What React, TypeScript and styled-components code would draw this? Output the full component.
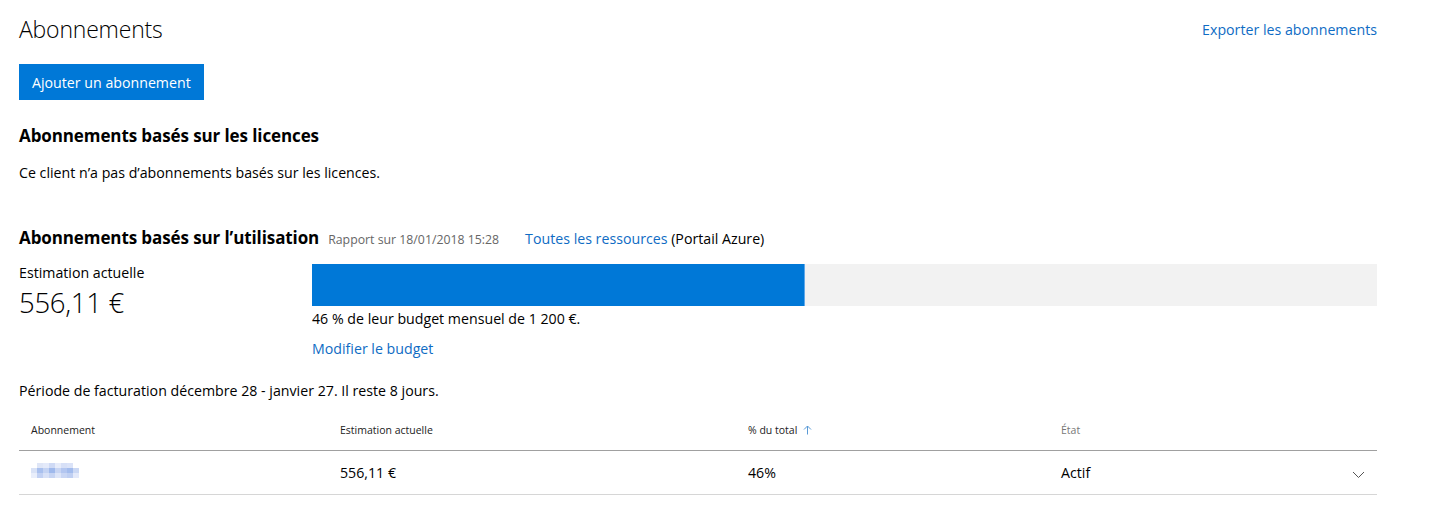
import React from "react";
import styled, { createGlobalStyle } from "styled-components";

const GlobalStyle = createGlobalStyle`
  html, body {
    margin: 0;
    padding: 0;
    background: #ffffff;
  }
  body {
    font-family: "Open Sans", "Noto Sans", Arial, sans-serif;
    color: #000000;
  }
`;

const Page = styled.div`
  width: 1358px;
  padding: 12px 0 0 19px;
`;

const TopRow = styled.div`
  display: flex;
  justify-content: space-between;
  align-items: center;
  height: 34px;
`;

const PageTitle = styled.h1`
  margin: 0;
  font-size: 23px;
  font-weight: 300;
  letter-spacing: -0.2px;
`;

const Link = styled.a<{ size?: number }>`
  color: #0f6cc4;
  font-size: ${(p) => p.size ?? 14.2}px;
  text-decoration: none;
  cursor: pointer;
`;

const PrimaryButton = styled.button`
  margin-top: 18px;
  height: 36px;
  padding: 0 13px;
  background: #0078d7;
  color: #ffffff;
  border: none;
  font-family: inherit;
  font-size: 14.2px;
`;

const SectionTitle = styled.h2`
  margin: 0;
  font-size: 17px;
  font-weight: 700;
  letter-spacing: -0.1px;
`;

const LicenceBlock = styled.div`
  margin-top: 24px;
`;

const Body = styled.p<{ top?: number }>`
  margin: ${(p) => p.top ?? 0}px 0 0 0;
  font-size: 14.2px;
  line-height: 20px;
`;

const UsageHeader = styled.div`
  margin-top: 43px;
  display: flex;
  align-items: baseline;
`;

const Meta = styled.span`
  margin-left: 9px;
  font-size: 12.3px;
  color: #666666;
`;

const Source = styled.span`
  margin-left: 26px;
  font-size: 14.2px;
`;

const EstimateRow = styled.div`
  margin-top: 14px;
  display: flex;
`;

const EstimateCol = styled.div`
  width: 293px;
`;

const Label = styled.div`
  font-size: 14.2px;
  line-height: 20px;
`;

const Amount = styled.div`
  font-size: 27.5px;
  font-weight: 300;
  line-height: 40px;
  letter-spacing: -0.3px;
`;

const BudgetCol = styled.div`
  flex: 1;
  padding-top: 1px;
`;

const BarTrack = styled.div`
  height: 42px;
  background: #f2f2f2;
`;

const BarFill = styled.div`
  height: 100%;
  background: #0078d7;
  border-right: 1px solid #5ea8ea;
  box-sizing: border-box;
`;

const BudgetText = styled.div`
  margin-top: 3px;
  font-size: 14.2px;
  line-height: 20px;
`;

const BudgetLink = styled.div`
  margin-top: 9px;
  line-height: 20px;
`;

const Table = styled.div`
  margin-top: 9px;
`;

const Row = styled.div<{ head?: boolean }>`
  display: grid;
  grid-template-columns: 309px 408px 313px 1fr 25px;
  align-items: center;
  padding-left: 12px;
  height: ${(p) => (p.head ? 40 : 43)}px;
  border-bottom: 1px solid ${(p) => (p.head ? "#a0a0a0" : "#d6d6d6")};
`;

const HeadCell = styled.div<{ muted?: boolean }>`
  font-size: 10.5px;
  color: ${(p) => (p.muted ? "#777777" : "#222222")};
  display: flex;
  align-items: center;
  gap: 6px;
`;

const Cell = styled.div`
  font-size: 14.2px;
`;

const ChevronCell = styled.div`
  display: flex;
  justify-content: flex-start;
  padding-top: 4px;
`;

const blurColors = [
  ["#fff", "#dfe6f7", "#e4eafa", "#cfdaf5", "#e7ecfa", "#d7e0f7", "#dbe3f8", "#fff"],
  ["#d9e2f6", "#a9c0ee", "#c4d3f3", "#9fb9ec", "#c8d5f3", "#b3c6f0", "#a3bced", "#cbd8f4"],
  ["#e9eefb", "#c2d1f3", "#d8e1f7", "#c6d4f3", "#dde5f8", "#c9d6f4", "#bfcff2", "#e3e9fa"],
];

function BlurredName() {
  return (
    <svg width="48" height="15" viewBox="0 0 48 15" style={{ display: "block", marginTop: -4 }}>
      {blurColors.map((row, r) =>
        row.map((c, i) => (
          <rect key={`${r}-${i}`} x={i * 6} y={r * 5} width="6" height="5" fill={c} />
        ))
      )}
    </svg>
  );
}

function ArrowUp() {
  return (
    <svg width="9" height="10" viewBox="0 0 9 10">
      <path d="M4.5 9.5V1M1 4.5L4.5 1L8 4.5" fill="none" stroke="#5a9ad6" strokeWidth="1" />
    </svg>
  );
}

function Chevron() {
  return (
    <svg width="13" height="8" viewBox="0 0 13 8">
      <path d="M1 1l5.5 5.5L12 1" fill="none" stroke="#555" strokeWidth="1" />
    </svg>
  );
}

export default function App() {
  const percent = 46;
  return (
    <>
      <GlobalStyle />
      <Page>
        <TopRow>
          <PageTitle>Abonnements</PageTitle>
          <Link>Exporter les abonnements</Link>
        </TopRow>
        <PrimaryButton>Ajouter un abonnement</PrimaryButton>

        <LicenceBlock>
          <SectionTitle>Abonnements basés sur les licences</SectionTitle>
          <Body top={16}>Ce client n’a pas d’abonnements basés sur les licences.</Body>
        </LicenceBlock>

        <UsageHeader>
          <SectionTitle>Abonnements basés sur l’utilisation</SectionTitle>
          <Meta>Rapport sur 18/01/2018 15:28</Meta>
          <Source>
            <Link>Toutes les ressources</Link> (Portail Azure)
          </Source>
        </UsageHeader>

        <EstimateRow>
          <EstimateCol>
            <Label>Estimation actuelle</Label>
            <Amount>556,11 €</Amount>
          </EstimateCol>
          <BudgetCol>
            <BarTrack>
              <BarFill style={{ width: `${percent}.3%` }} />
            </BarTrack>
            <BudgetText>46 % de leur budget mensuel de 1 200 €.</BudgetText>
            <BudgetLink>
              <Link>Modifier le budget</Link>
            </BudgetLink>
          </BudgetCol>
        </EstimateRow>

        <Body top={22}>Période de facturation décembre 28 - janvier 27. Il reste 8 jours.</Body>

        <Table>
          <Row head>
            <HeadCell>Abonnement</HeadCell>
            <HeadCell>Estimation actuelle</HeadCell>
            <HeadCell>
              % du total <ArrowUp />
            </HeadCell>
            <HeadCell muted>État</HeadCell>
            <div />
          </Row>
          <Row>
            <Cell>
              <BlurredName />
            </Cell>
            <Cell>556,11 €</Cell>
            <Cell>46%</Cell>
            <Cell>Actif</Cell>
            <ChevronCell>
              <Chevron />
            </ChevronCell>
          </Row>
        </Table>
      </Page>
    </>
  );
}
